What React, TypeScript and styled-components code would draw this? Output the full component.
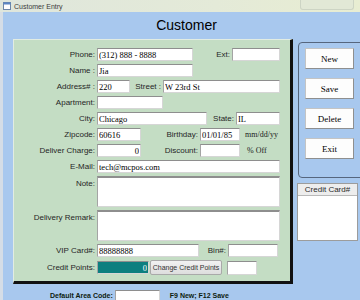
import styled, { createGlobalStyle } from 'styled-components';

const GlobalStyle = createGlobalStyle`
  html, body {
    margin: 0;
    padding: 0;
  }
  body {
    width: 360px;
    height: 300px;
    overflow: hidden;
    font-family: 'Liberation Sans', Arial, sans-serif;
  }
`;

const App = () => {
  return (
    <>
      <GlobalStyle />
      <Window>
        <TitleBar>
          <svg width="8" height="8" viewBox="0 0 8 8">
            <rect x="0.5" y="0.5" width="7" height="7" fill="#fff" stroke="#6d86a8" />
            <rect x="0.5" y="0.5" width="7" height="2" fill="#5b86c4" />
          </svg>
          <TitleText>Customer Entry</TitleText>
          <GhostTab />
        </TitleBar>

        <Body>
          <Heading>Customer</Heading>

          <Content>
            <Panel>
              <Row>
                <Label>Phone:</Label>
                <Field $w={96} defaultValue="(312) 888 - 8888" />
                <SubLabel $w={39}>Ext:</SubLabel>
                <Field $w={48} />
              </Row>
              <Row>
                <Label>Name :</Label>
                <Field $w={96} defaultValue="Jia" />
              </Row>
              <Row>
                <Label>Address# :</Label>
                <Field $w={33} defaultValue="220" />
                <SubLabel $w={33}>Street :</SubLabel>
                <Field $w={117} defaultValue="W 23rd St" />
              </Row>
              <Row>
                <Label>Apartment:</Label>
                <Field $w={66} />
              </Row>
              <Row>
                <Label>City:</Label>
                <Field $w={110} defaultValue="Chicago" />
                <SubLabel $w={29}>State:</SubLabel>
                <Field $w={44} defaultValue="IL" />
              </Row>
              <Row>
                <Label>Zipcode:</Label>
                <Field $w={44} defaultValue="60616" />
                <SubLabel $w={59}>Birthday:</SubLabel>
                <Field $w={40} defaultValue="01/01/85" />
                <Hint $gap={5}>mm/dd/yy</Hint>
              </Row>
              <Row>
                <Label>Deliver Charge:</Label>
                <Field $w={44} $right defaultValue="0" />
                <SubLabel $w={59}>Discount:</SubLabel>
                <Field $w={40} />
                <Hint $gap={7}>% Off</Hint>
              </Row>
              <Row>
                <Label>E-Mail:</Label>
                <Field $w={183} defaultValue="tech@mcpos.com" />
              </Row>
              <AreaRow>
                <Label $top>Note:</Label>
                <Memo />
              </AreaRow>
              <AreaRow>
                <Label $top>Delivery Remark:</Label>
                <Memo />
              </AreaRow>
              <Row>
                <Label>VIP Card#:</Label>
                <Field $w={102} defaultValue="88888888" />
                <SubLabel $w={29}>Bin#:</SubLabel>
                <Field $w={50} />
              </Row>
              <PointsRow>
                <Label>Credit Points:</Label>
                <Field $w={52} $right $teal defaultValue="0" />
                <SmallButton>Change Credit Points</SmallButton>
                <PointsBox />
              </PointsRow>
            </Panel>

            <Side>
              <ActionPanel>
                <ActionButton>New</ActionButton>
                <ActionButton>Save</ActionButton>
                <ActionButton>Delete</ActionButton>
                <ActionButton>Exit</ActionButton>
              </ActionPanel>
              <CardList>
                <CardHeader>Credit Card#</CardHeader>
              </CardList>
            </Side>
          </Content>

          <Footer>
            <FooterText>Default Area Code:</FooterText>
            <AreaCode />
            <FooterText $gap={10}>F9 New; F12 Save</FooterText>
          </Footer>
        </Body>
      </Window>
    </>
  );
};

const Window = styled.div`
  width: 360px;
  height: 300px;
  display: flex;
  flex-direction: column;
  overflow: hidden;
`;

const TitleBar = styled.div`
  height: 12px;
  flex-shrink: 0;
  display: flex;
  align-items: center;
  gap: 3px;
  padding-left: 3px;
  background: linear-gradient(90deg, #dfe6dc 0%, #e4ead8 60%, #e8edd2 100%);
`;

const TitleText = styled.span`
  font-size: 7px;
  color: #3c3c3c;
  white-space: nowrap;
`;

const GhostTab = styled.div`
  margin-left: auto;
  margin-right: 6px;
  width: 52px;
  height: 9px;
  align-self: flex-start;
  border: 1px solid #cdd4c4;
  border-top: none;
  border-radius: 0 0 3px 3px;
  background: #e2e8d6;
`;

const Body = styled.div`
  flex: 1;
  display: flex;
  flex-direction: column;
  background: #a8c8ee;
  border-left: 3px solid #d5dde6;
`;

const Heading = styled.h1`
  margin: 0;
  height: 27px;
  line-height: 27px;
  padding-left: 10px;
  text-align: center;
  font-size: 14px;
  font-weight: normal;
  color: #000;
`;

const Content = styled.div`
  display: flex;
  align-items: flex-start;
  gap: 5px;
  padding-left: 10px;
`;

const Panel = styled.div`
  width: 280px;
  flex-shrink: 0;
  box-sizing: border-box;
  display: flex;
  flex-direction: column;
  gap: 3px;
  padding: 8px 0 6px 0;
  background: #c4ddc4;
  border-top: 1px solid #e2ece2;
  border-left: 1px solid #e2ece2;
  border-right: 3px solid #111;
  border-bottom: 3px solid #111;
`;

const Row = styled.div`
  display: flex;
  align-items: center;
  height: 13px;
`;

const AreaRow = styled.div`
  display: flex;
  align-items: flex-start;
  height: 31px;
`;

const PointsRow = styled.div`
  display: flex;
  align-items: center;
  height: 15px;
`;

const Label = styled.span<{ $top?: boolean }>`
  width: 83px;
  flex-shrink: 0;
  box-sizing: border-box;
  padding-right: 2px;
  padding-top: ${(p) => (p.$top ? '3px' : '0')};
  text-align: right;
  font-size: 8px;
  color: #262626;
  white-space: nowrap;
`;

const SubLabel = styled.span<{ $w: number }>`
  width: ${(p) => p.$w}px;
  flex-shrink: 0;
  box-sizing: border-box;
  padding-right: 2px;
  text-align: right;
  font-size: 8px;
  color: #262626;
  white-space: nowrap;
`;

const Field = styled.input<{ $w: number; $right?: boolean; $teal?: boolean }>`
  width: ${(p) => p.$w}px;
  height: 13px;
  flex-shrink: 0;
  box-sizing: border-box;
  margin: 0;
  padding: 0 1px;
  border: 1px solid #d6d6d6;
  border-top-color: #8e8e8e;
  border-left-color: #a4a4a4;
  background: ${(p) => (p.$teal ? '#0c7f7f' : '#fff')};
  color: ${(p) => (p.$teal ? '#fff' : '#000')};
  text-align: ${(p) => (p.$right ? 'right' : 'left')};
  font-family: 'Liberation Serif', 'Times New Roman', serif;
  font-size: 8.5px;
  outline: none;
`;

const Memo = styled.textarea`
  width: 183px;
  height: 31px;
  box-sizing: border-box;
  margin: 0;
  padding: 1px;
  resize: none;
  border: 1px solid #d6d6d6;
  border-top: 2px solid #8e8e8e;
  border-left-color: #a4a4a4;
  background: #fff;
  outline: none;
`;

const Hint = styled.span<{ $gap: number }>`
  margin-left: ${(p) => p.$gap}px;
  font-family: 'Liberation Serif', 'Times New Roman', serif;
  font-size: 8px;
  color: #1a1a1a;
  white-space: nowrap;
`;

const SmallButton = styled.button`
  width: 72px;
  height: 15px;
  margin: 0 0 0 1px;
  padding: 0;
  box-sizing: border-box;
  border: 1px solid #a9a9a9;
  border-radius: 2px;
  background: linear-gradient(#f2f2f2, #dddddd);
  font-family: 'Liberation Sans', Arial, sans-serif;
  font-size: 7px;
  color: #333;
  white-space: nowrap;
`;

const PointsBox = styled.div`
  width: 30px;
  height: 14px;
  margin-left: 5px;
  box-sizing: border-box;
  background: #fff;
  border: 1px solid #d6d6d6;
  border-top-color: #8e8e8e;
  border-left-color: #a4a4a4;
`;

const Side = styled.div`
  display: flex;
  flex-direction: column;
  gap: 5px;
  padding-top: 3px;
`;

const ActionPanel = styled.div`
  width: 80px;
  height: 136px;
  box-sizing: border-box;
  display: flex;
  flex-direction: column;
  gap: 9px;
  padding: 5px 0 0 6px;
  border: 1px solid #56667e;
  border-radius: 4px;
`;

const ActionButton = styled.button`
  width: 49px;
  height: 21px;
  margin: 0;
  padding: 0;
  box-sizing: border-box;
  background: #fdfdfd;
  border: 1px solid #c4c4c4;
  border-right-color: #8f8f8f;
  border-bottom-color: #8f8f8f;
  font-family: 'Liberation Serif', 'Times New Roman', serif;
  font-size: 9px;
  color: #000;
`;

const CardList = styled.div`
  width: 61px;
  height: 58px;
  margin-left: -1px;
  box-sizing: border-box;
  background: #fff;
  border: 1px solid #9c9c9c;
`;

const CardHeader = styled.div`
  height: 11px;
  line-height: 11px;
  text-align: center;
  background: #ededed;
  border-bottom: 1px solid #b9b9b9;
  font-size: 8px;
  color: #2a2a2a;
  white-space: nowrap;
`;

const Footer = styled.div`
  display: flex;
  align-items: flex-start;
  padding: 6px 0 0 47px;
`;

const FooterText = styled.span<{ $gap?: number }>`
  margin-left: ${(p) => p.$gap ?? 0}px;
  padding-top: 2px;
  margin-right: 2px;
  font-size: 7px;
  font-weight: bold;
  color: #0e1c0e;
  white-space: nowrap;
`;

const AreaCode = styled.div`
  width: 45px;
  height: 13px;
  box-sizing: border-box;
  background: #fff;
  border: 1px solid #d6d6d6;
  border-top-color: #8e8e8e;
  border-left-color: #a4a4a4;
`;

export default App;
